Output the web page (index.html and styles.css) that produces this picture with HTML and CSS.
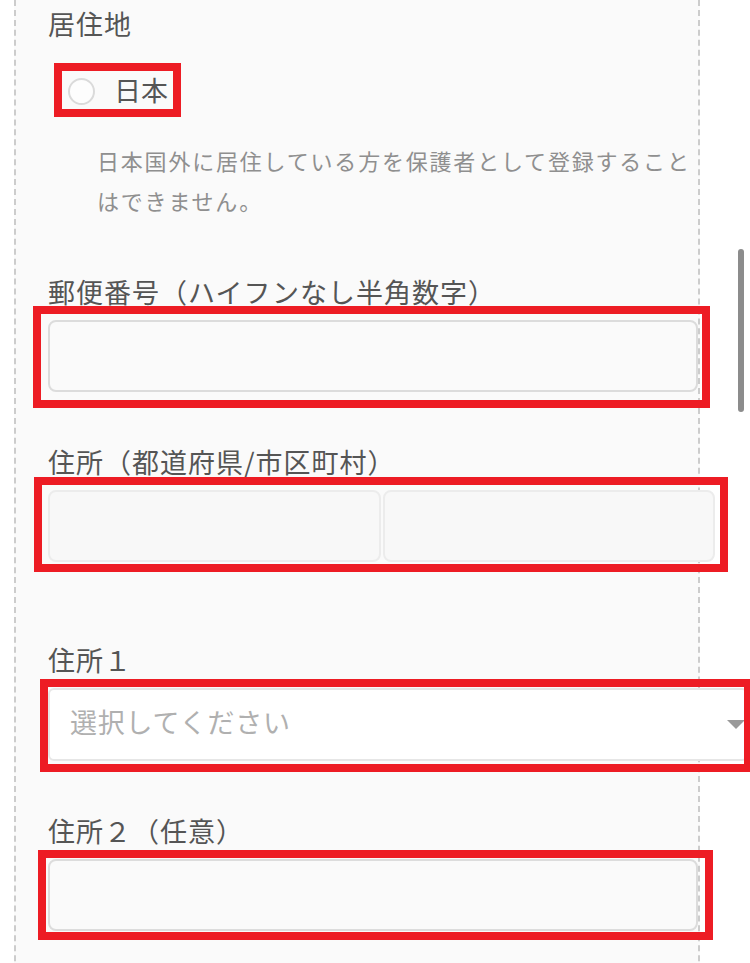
FILE: index.html
```html
<!DOCTYPE html>
<html lang="ja">
<head>
    <meta charset="UTF-8">
    <title>保護者情報の登録</title>
    <link rel="stylesheet" href="styles.css">
</head>
<body>
    <div class="panel">
        <div class="field field-residence">
            <p class="field-label">居住地</p>
            <label class="radio-option">
                <span class="radio-circle"></span>
                <span class="radio-text">日本</span>
            </label>
            <p class="field-note">日本国外に居住している方を保護者として登録することはできません。</p>
        </div>

        <div class="field">
            <p class="field-label">郵便番号（ハイフンなし半角数字）</p>
            <div class="hl hl-zip">
                <input type="text" class="text-input">
            </div>
        </div>

        <div class="field field-wide">
            <p class="field-label">住所（都道府県/市区町村）</p>
            <div class="hl hl-city">
                <div class="input-row">
                    <input type="text" class="text-input locked" readonly>
                    <input type="text" class="text-input locked" readonly>
                </div>
            </div>
        </div>

        <div class="field">
            <p class="field-label">住所１</p>
            <div class="hl hl-select">
                <select class="select-input">
                    <option>選択してください</option>
                </select>
                <span class="select-arrow"></span>
            </div>
        </div>

        <div class="field">
            <p class="field-label">住所２（任意）</p>
            <div class="hl hl-addr2">
                <input type="text" class="text-input">
            </div>
        </div>
    </div>

    <div class="scrollbar"></div>
</body>
</html>
```

FILE: styles.css
```css
html {
    overflow: hidden;
}

body {
    margin: 0;
    background-color: #ffffff;
    font-family: "Noto Sans CJK JP", "Noto Sans", sans-serif;
    color: #555555;
}

.panel {
    box-sizing: border-box;
    width: 686px;
    min-height: 963px;
    margin-left: 14px;
    padding: 4px 0 20px 32px;
    background-color: #fafafa;
    border-left: 2px dashed #cccccc;
    border-right: 2px dashed #cccccc;
}

.field {
    margin-bottom: 50px;
}

.field-wide {
    margin-bottom: 78px;
}

.field-label {
    margin: 0 0 9px;
    font-size: 27px;
    line-height: 39px;
    letter-spacing: 1px;
    color: #555555;
}

/* radio */
.radio-option {
    display: inline-flex;
    align-items: center;
    height: 38px;
    margin: 11px 0 0 6px;
    padding: 0 5px 0 6px;
    border: 8px solid #ed1c24;
}

.radio-circle {
    box-sizing: border-box;
    width: 27px;
    height: 27px;
    margin-top: 3px;
    border: 2px solid #dadada;
    border-radius: 50%;
    background-color: #fdfdfd;
}

.radio-text {
    margin-left: 19px;
    font-size: 27px;
    line-height: 38px;
    color: #555555;
}

.field-residence {
    margin-bottom: 52px;
}

.field-note {
    margin: 23px 0 0 49px;
    font-size: 22px;
    line-height: 40px;
    letter-spacing: 1.8px;
    color: #8f8f8f;
}

/* inputs */
.text-input {
    display: block;
    box-sizing: border-box;
    width: 650px;
    height: 72px;
    margin: 0;
    padding: 0 18px;
    border: 2px solid #dcdcdc;
    border-radius: 8px;
    background-color: #fafafa;
    font-family: inherit;
    font-size: 27px;
    outline: none;
}

.input-row {
    display: flex;
    gap: 2px;
    width: 667px;
}

.input-row .text-input {
    flex: 1;
    width: auto;
    min-width: 0;
}

.text-input.locked {
    border-color: #ececec;
    background-color: #f8f8f8;
}

.select-input {
    display: block;
    box-sizing: border-box;
    width: 700px;
    height: 73px;
    margin: 0;
    padding: 0 20px 6px;
    border: 2px solid #e6e6e6;
    border-radius: 6px;
    background-color: #ffffff;
    font-family: inherit;
    font-size: 27px;
    letter-spacing: 0.8px;
    color: #b0b0b0;
    appearance: none;
    -webkit-appearance: none;
    outline: none;
}

.select-arrow {
    position: absolute;
    top: 32px;
    left: 679px;
    width: 0;
    height: 0;
    border-left: 9px solid transparent;
    border-right: 9px solid transparent;
    border-top: 9px solid #9a9a9a;
}

/* red highlight frames */
.hl {
    position: relative;
}

.hl::after {
    content: "";
    position: absolute;
    border: 8px solid #ed1c24;
    pointer-events: none;
}

.hl-zip::after {
    top: -14px;
    right: -12px;
    bottom: -16px;
    left: -15px;
}

.hl-city::after {
    top: -13px;
    right: -30px;
    bottom: -10px;
    left: -14px;
}

.hl-select::after {
    top: -9px;
    right: -54px;
    bottom: -11px;
    left: -8px;
}

.hl-addr2::after {
    top: -9px;
    right: -15px;
    bottom: -9px;
    left: -10px;
}

.scrollbar {
    position: fixed;
    top: 249px;
    right: 6px;
    width: 6px;
    height: 163px;
    border-radius: 3px;
    background-color: #8c8c8c;
}
```
